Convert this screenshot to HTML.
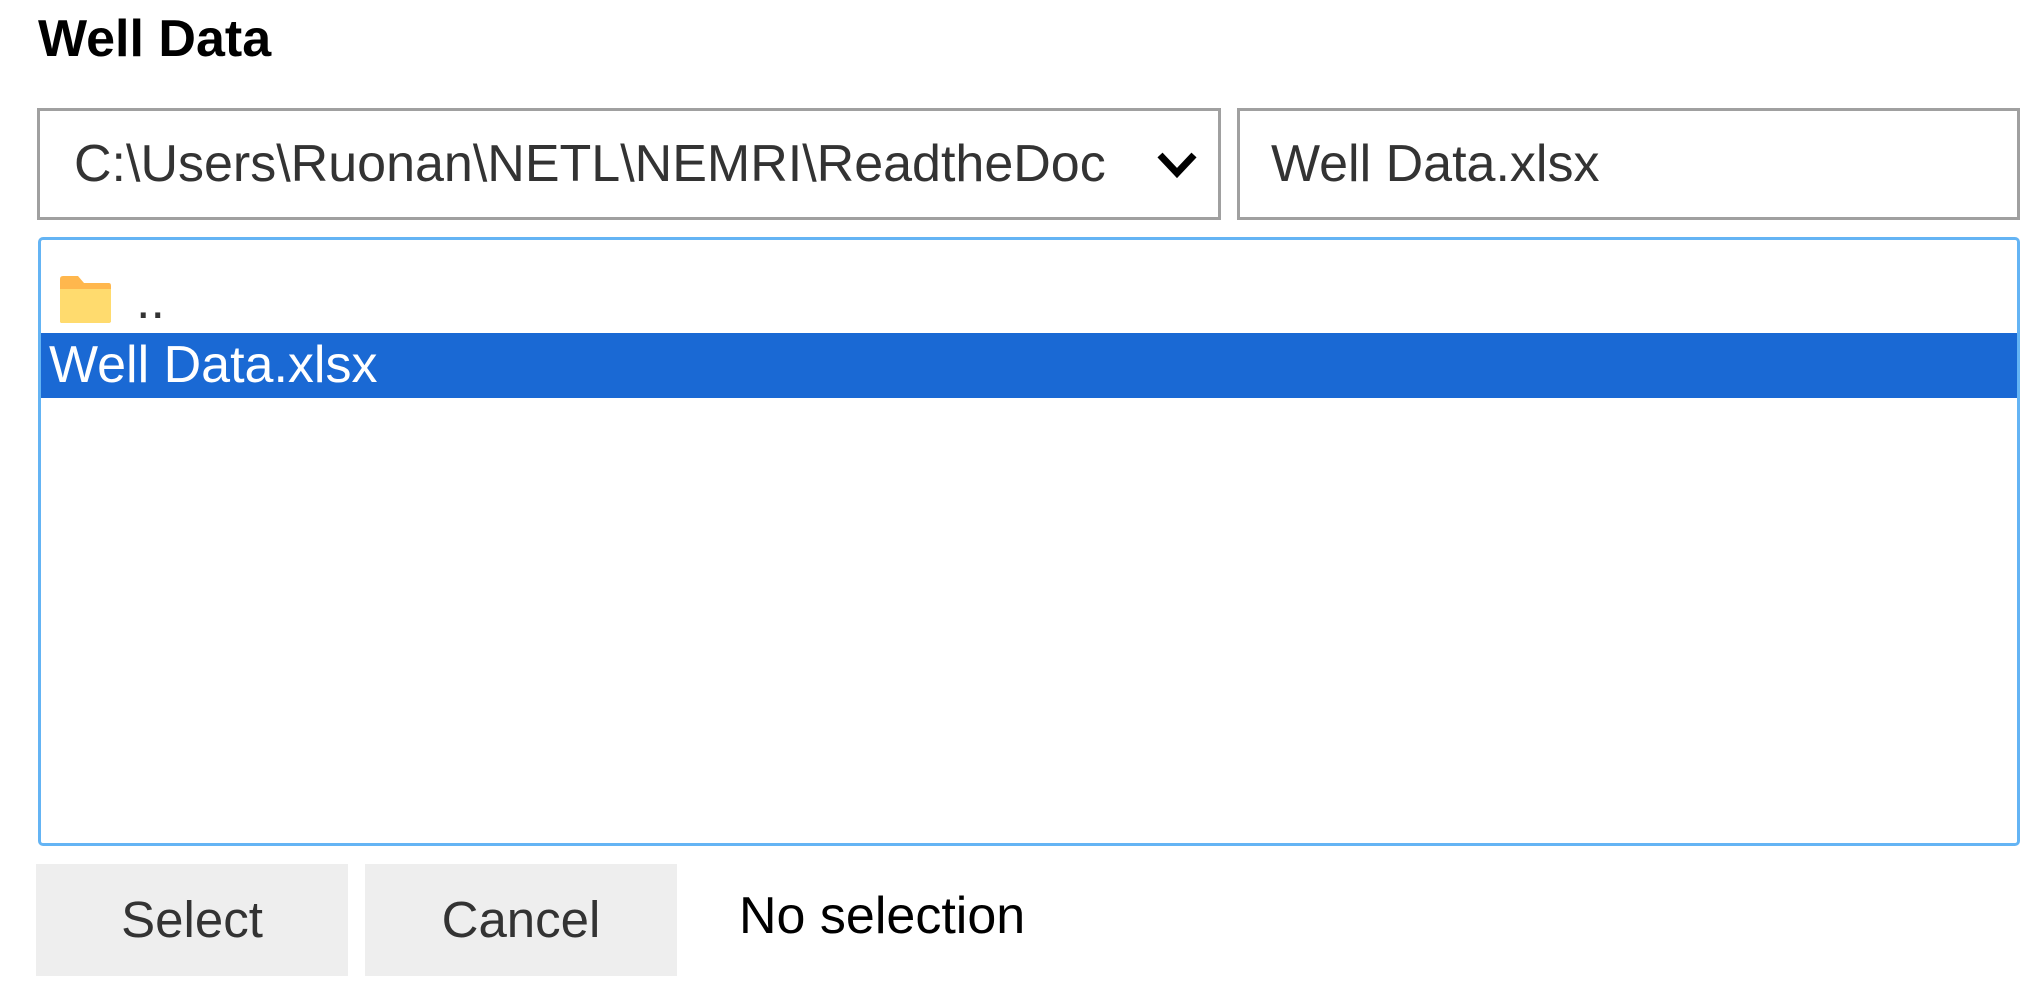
<!DOCTYPE html>
<html><head><meta charset="utf-8"><style>
html,body{margin:0;padding:0;width:2039px;height:987px;background:#fff;overflow:hidden;font-family:"Liberation Sans",Arial,sans-serif;}
.a{position:absolute;}
.title{left:38px;top:9px;font-size:52px;font-weight:bold;color:#000;line-height:60px;}
.box{border:3px solid #a0a0a0;box-sizing:border-box;background:#fff;}
.t{font-size:52px;color:#333;line-height:60px;white-space:nowrap;}
.list{left:38px;top:237px;width:1982px;height:609px;border:3px solid #64b4f4;border-radius:5px;box-sizing:border-box;}
.btn{background:#eeeeee;top:864px;height:112px;width:312px;font-size:51px;color:#333;line-height:112px;text-align:center;}
</style></head><body>
<div class="a title">Well Data</div>
<div class="a box" style="left:37px;top:108px;width:1184px;height:112px;"></div>
<div class="a t" style="left:74px;top:134px;">C:\Users\Ruonan\NETL\NEMRI\ReadtheDoc</div>
<svg class="a" style="left:1156px;top:150px" width="42" height="30" viewBox="0 0 42 30"><path d="M4 5 L21 23 L38 5" fill="none" stroke="#000" stroke-width="7"/></svg>
<div class="a box" style="left:1237px;top:108px;width:783px;height:112px;"></div>
<div class="a t" style="left:1271px;top:134px;">Well Data.xlsx</div>
<div class="a list"></div>
<svg class="a" style="left:58px;top:275px" width="54" height="49" viewBox="0 0 54 49"><path d="M2 4 Q2 1 5 1 H20 L26 8 H51 Q53 8 53 11 V46 Q53 48 50 48 H4 Q2 48 2 46 Z" fill="#ffb74d"/><path d="M2 14 H53 V46 Q53 48 50 48 H4 Q2 48 2 46 Z" fill="#ffdb6e"/></svg>
<div class="a t" style="left:136px;top:271px;color:#333;">..</div>
<div class="a" style="left:41px;top:333px;width:1976px;height:65px;background:#1a69d4;"></div>
<div class="a t" style="left:49px;top:333px;color:#fff;line-height:65px;">Well Data.xlsx</div>
<div class="a btn" style="left:36px;">Select</div>
<div class="a btn" style="left:365px;">Cancel</div>
<div class="a t" style="left:739px;top:886px;color:#000;">No selection</div>
</body></html>
